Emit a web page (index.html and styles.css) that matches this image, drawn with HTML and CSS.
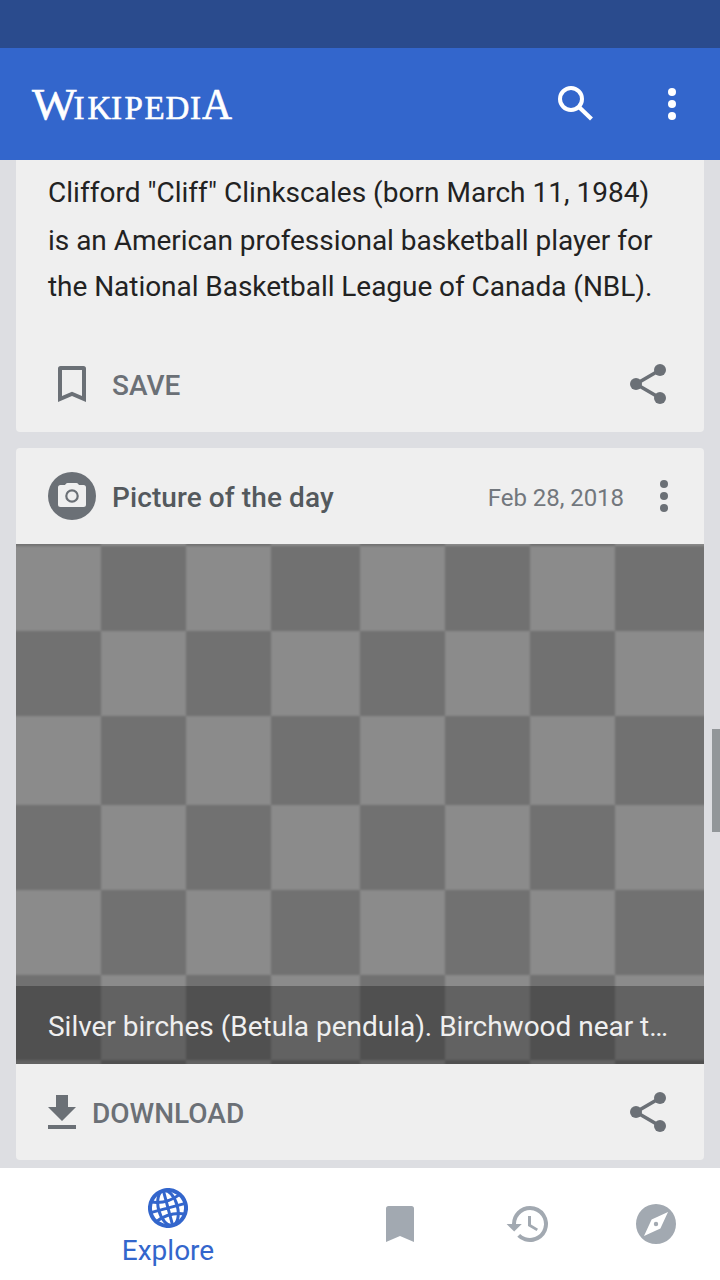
FILE: index.html
```html
<!DOCTYPE html>
<html lang="en">
<head>
<meta charset="utf-8">
<title>Wikipedia</title>
<link rel="stylesheet" href="styles.css">
</head>
<body>
<div class="app">
  <div class="status-bar"></div>
  <header class="toolbar">
    <svg class="logo" width="208" height="48" role="img" aria-label="Wikipedia">
      <text class="logo-text logo-cap" x="0" y="38.500" textLength="44.500" lengthAdjust="spacingAndGlyphs">W</text>
      <text class="logo-text" y="38.500" x="41.500 55.500 79 92.500 112.500 133.500 158">IKIPEDI</text>
      <text class="logo-text logo-cap" x="170" y="38.500" textLength="30" lengthAdjust="spacingAndGlyphs">A</text>
    </svg>
    <div class="toolbar-actions">
      <svg width="48" height="48" viewBox="0 0 48 48"><circle cx="19" cy="19" r="11" fill="none" stroke="#fff" stroke-width="4"/><path d="M27.5 27.5 39.5 39" stroke="#fff" stroke-width="4.2"/></svg>
      <svg width="48" height="48" viewBox="0 0 48 48" fill="#fff"><circle cx="24" cy="12" r="4"/><circle cx="24" cy="24" r="4"/><circle cx="24" cy="36" r="4"/></svg>
    </div>
  </header>

  <main class="feed">
    <article class="card card-article">
      <p class="extract"><span class="line line-first">Clifford "Cliff" Clinkscales (born March 11, 1984)</span><span class="line line-middle">is an American professional basketball player for</span><span class="line line-last">the National Basketball League of Canada (NBL).</span></p>
      <div class="actions">
        <svg width="48" height="48" viewBox="0 0 24 24"><path fill="#6b7076" fill-rule="evenodd" d="M17.7 3H6.3Q5 3 5 4.3V21l7-3 7 3V4.3Q19 3 17.7 3zM17 18l-5-2.18L7 18V5h10z"/></svg>
        <span class="action-label">SAVE</span>
        <svg class="share" width="48" height="48" viewBox="0 0 48 48" fill="#6b7076"><path d="M36 10 12 24l24 14" fill="none" stroke="#6b7076" stroke-width="3.6"/><circle cx="36" cy="10" r="6"/><circle cx="12" cy="24" r="6"/><circle cx="36" cy="38" r="6"/></svg>
      </div>
    </article>

    <article class="card">
      <div class="card-header">
        <svg width="48" height="48" viewBox="0 0 48 48"><circle cx="24" cy="24" r="24" fill="#6b7076"/><path fill="#efefef" d="M12.500 13H17l1.200-1.400q.5-.6 1.300-.6h9q.8 0 1.300.6L31 13h4.500q2.500 0 2.500 2.500v17q0 2.500-2.500 2.500h-23Q10 35 10 32.500v-17Q10 13 12.500 13z"/><circle cx="24" cy="24" r="5.700" fill="none" stroke="#6b7076" stroke-width="2.200"/></svg>
        <h2 class="card-title">Picture of the day</h2>
        <span class="card-date">Feb 28, 2018</span>
        <svg class="more" width="48" height="48" viewBox="0 0 48 48" fill="#6b7076"><circle cx="24" cy="12" r="4"/><circle cx="24" cy="24" r="4"/><circle cx="24" cy="36" r="4"/></svg>
      </div>
      <div class="picture">
        <svg class="checker" width="688" height="520" viewBox="0 0 688 520">
          <defs><filter id="soft" x="-20" y="-20" width="728" height="560" filterUnits="userSpaceOnUse" color-interpolation-filters="sRGB"><feGaussianBlur stdDeviation="1.3"/></filter></defs>
          <rect width="688" height="520" fill="#8b8b8b"/>
          <g fill="#717171" filter="url(#soft)">
            <path d="M-9-8H85V2H-9zM170-8H255V2H170zM344-8H429V2H344zM514-8H599V2H514z"/>
            <path d="M85 2H170V87H85zM255 2H344V87H255zM429 2H514V87H429zM599 2H700V87H599z"/>
            <path d="M-9 87H85V172H-9zM170 87H255V172H170zM344 87H429V172H344zM514 87H599V172H514z"/>
            <path d="M85 172H170V261H85zM255 172H344V261H255zM429 172H514V261H429zM599 172H700V261H599z"/>
            <path d="M-9 261H85V346H-9zM170 261H255V346H170zM344 261H429V346H344zM514 261H599V346H514z"/>
            <path d="M85 346H170V431H85zM255 346H344V431H255zM429 346H514V431H429zM599 346H700V431H599z"/>
            <path d="M-9 431H85V516H-9zM170 431H255V516H170zM344 431H429V516H344zM514 431H599V516H514z"/>
            <path d="M85 516H170V530H85zM255 516H344V530H255zM429 516H514V530H429zM599 516H700V530H599z"/>
          </g>
        </svg>
        <div class="caption">Silver birches (Betula pendula). Birchwood near t…</div>
      </div>
      <div class="actions">
        <svg width="28" height="48" viewBox="0 0 28 48" fill="#6b7076"><path d="M8 7H20V19H28L14 33 0 19H8zM0 37H28V41H0z"/></svg>
        <span class="action-label">DOWNLOAD</span>
        <svg class="share" width="48" height="48" viewBox="0 0 48 48" fill="#6b7076"><path d="M36 10 12 24l24 14" fill="none" stroke="#6b7076" stroke-width="3.6"/><circle cx="36" cy="10" r="6"/><circle cx="12" cy="24" r="6"/><circle cx="36" cy="38" r="6"/></svg>
      </div>
    </article>
  </main>

  <nav class="tabs">
    <div class="tab tab-active">
      <svg width="40" height="40" viewBox="-20 -20 40 40"><g fill="none" stroke="#36c" stroke-width="3" transform="rotate(-15)"><circle r="18" stroke-width="4"/><path d="M0-18V18M-18 0H18M-14.500-10Q0-4 14.500-10M-14.500 10Q0 4 14.500 10"/><ellipse rx="9.500" ry="18"/></g></svg>
      <span>Explore</span>
    </div>
    <div class="tab"><svg width="48" height="48" viewBox="0 0 24 24"><path fill="#a2a9b1" d="M17.700 3H6.300Q5 3 5 4.300V21l7-3 7 3V4.300Q19 3 17.700 3z"/></svg></div>
    <div class="tab"><svg width="48" height="48" viewBox="0 0 24 24"><path fill="#a2a9b1" d="M13 3a9 9 0 0 0-9 9H1.300L5.100 15.800 8.900 12H6a7 7 0 1 1 2.060 4.940L6.640 18.360A9 9 0 1 0 13 3zM12 8v5l4.280 2.540.72-1.210-3.500-2.080V8z"/></svg></div>
    <div class="tab"><svg width="48" height="48" viewBox="0 0 24 24"><path fill="#a2a9b1" d="M12 10.900a1.100 1.100 0 1 0 0 2.200 1.100 1.100 0 0 0 0-2.200zM12 2a10 10 0 1 0 0 20 10 10 0 0 0 0-20zm2.190 12.190L6 18l3.810-8.190L18 6z"/></svg></div>
  </nav>
  <div class="scroll-thumb"></div>
</div>
</body>
</html>
```
FILE: styles.css
```css
* { box-sizing: border-box; }

body {
  margin: 0;
  font-family: Roboto, sans-serif;
  font-size: 28px;
}

.app {
  position: relative;
  display: flex;
  flex-direction: column;
  width: 720px;
  height: 1280px;
  overflow: hidden;
  background: #dddee2;
}

.status-bar { height: 48px; background: #2a4b8d; }

.toolbar {
  display: flex;
  align-items: center;
  justify-content: space-between;
  height: 112px;
  padding: 0 24px 0 32px;
  background: #36c;
}

.logo { overflow: visible; }

.logo-text {
  font-family: "Liberation Serif", serif;
  font-size: 33px;
  fill: #fff;
  stroke: #fff;
  stroke-width: 0.6px;
}

.logo-cap { font-size: 45px; }

.toolbar-actions { display: flex; gap: 48px; }

.feed {
  flex: 1;
  display: flex;
  flex-direction: column;
  gap: 16px;
  padding: 0 16px;
}

.card {
  border-radius: 4px;
  background: #efefef;
}

.card-article {
  height: 272px;
  border-radius: 0 0 4px 4px;
}

.extract {
  height: 176px;
  margin: 0;
  padding: 9px 0 0 32px;
  line-height: 47px;
  white-space: nowrap;
  color: #222;
}

.line { display: block; }
.line-first { letter-spacing: 0.02px; }
.line-middle { padding-top: 1px; letter-spacing: -0.02px; }
.line-last { line-height: 45px; letter-spacing: -0.05px; }

.actions {
  display: flex;
  align-items: center;
  height: 96px;
  padding: 0 32px;
}

.action-label {
  margin: 2px 0 0 16px;
  font-weight: 500;
  color: #6b7076;
}

.share { margin-left: auto; }

.card-header {
  display: flex;
  align-items: center;
  height: 96px;
  padding: 0 16px 0 32px;
}

.card-title {
  margin: 2px auto 0 16px;
  font-size: 28px;
  font-weight: 500;
  letter-spacing: 0.09px;
  color: #54595d;
}

.card-date {
  margin-top: 4px;
  font-size: 24px;
  letter-spacing: -0.05px;
  color: #72777d;
}

.more { margin-left: 16px; }

.picture {
  position: relative;
  height: 520px;
  overflow: hidden;
}

.checker { display: block; }

.caption {
  position: absolute;
  inset: auto 0 0;
  height: 78px;
  padding-left: 32px;
  line-height: 82px;
  letter-spacing: -0.02px;
  white-space: nowrap;
  color: #efefef;
  background: rgba(0, 0, 0, 0.29);
}

.tabs {
  display: grid;
  grid-template-columns: 336px 128px 128px 128px;
  height: 112px;
  background: #fff;
}

.tab {
  display: flex;
  flex-direction: column;
  align-items: center;
  justify-content: center;
}

.tab-active {
  justify-content: flex-start;
  padding-top: 20px;
  color: #36c;
  line-height: 46px;
}

.scroll-thumb {
  position: absolute;
  top: 729px;
  right: 0;
  width: 8px;
  height: 103px;
  background: #929699;
}
```
